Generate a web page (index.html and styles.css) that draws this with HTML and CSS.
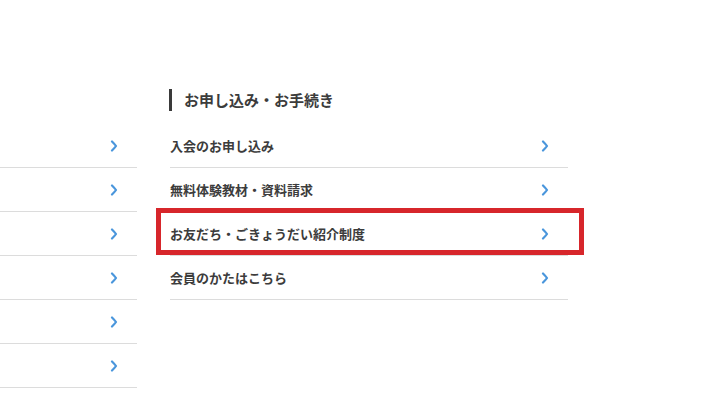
FILE: index.html
```html
<!DOCTYPE html>
<html lang="ja">
<head>
<meta charset="utf-8">
<link rel="stylesheet" href="styles.css">
</head>
<body>
<div class="page">
  <div class="col col-left">
    <ul class="list">
      <li class="row"><span class="label"></span><svg class="chev" viewBox="0 0 8 12" width="8" height="12"><path d="M2 1.5 Q5 4.5 6 6 Q5 7.5 2 10.5"/></svg></li>
      <li class="row"><span class="label"></span><svg class="chev" viewBox="0 0 8 12" width="8" height="12"><path d="M2 1.5 Q5 4.5 6 6 Q5 7.5 2 10.5"/></svg></li>
      <li class="row"><span class="label"></span><svg class="chev" viewBox="0 0 8 12" width="8" height="12"><path d="M2 1.5 Q5 4.5 6 6 Q5 7.5 2 10.5"/></svg></li>
      <li class="row"><span class="label"></span><svg class="chev" viewBox="0 0 8 12" width="8" height="12"><path d="M2 1.5 Q5 4.5 6 6 Q5 7.5 2 10.5"/></svg></li>
      <li class="row"><span class="label"></span><svg class="chev" viewBox="0 0 8 12" width="8" height="12"><path d="M2 1.5 Q5 4.5 6 6 Q5 7.5 2 10.5"/></svg></li>
      <li class="row"><span class="label"></span><svg class="chev" viewBox="0 0 8 12" width="8" height="12"><path d="M2 1.5 Q5 4.5 6 6 Q5 7.5 2 10.5"/></svg></li>
    </ul>
  </div>
  <div class="col col-right">
    <h2 class="heading">お申し込み・お手続き</h2>
    <ul class="list">
      <li class="row"><span class="label">入会のお申し込み</span><svg class="chev" viewBox="0 0 8 12" width="8" height="12"><path d="M2 1.5 Q5 4.5 6 6 Q5 7.5 2 10.5"/></svg></li>
      <li class="row"><span class="label">無料体験教材・資料請求</span><svg class="chev" viewBox="0 0 8 12" width="8" height="12"><path d="M2 1.5 Q5 4.5 6 6 Q5 7.5 2 10.5"/></svg></li>
      <li class="row row-highlight"><span class="label">お友だち・ごきょうだい紹介制度</span><svg class="chev" viewBox="0 0 8 12" width="8" height="12"><path d="M2 1.5 Q5 4.5 6 6 Q5 7.5 2 10.5"/></svg></li>
      <li class="row"><span class="label">会員のかたはこちら</span><svg class="chev" viewBox="0 0 8 12" width="8" height="12"><path d="M2 1.5 Q5 4.5 6 6 Q5 7.5 2 10.5"/></svg></li>
    </ul>
  </div>
</div>
</body>
</html>
```
FILE: styles.css
```css
html, body {
  margin: 0;
  padding: 0;
  background: #ffffff;
}
body {
  font-family: "Noto Sans CJK JP", "Noto Sans", sans-serif;
  color: #3c3c3c;
  width: 720px;
  height: 400px;
  overflow: hidden;
}
.page {
  display: flex;
  gap: 33px;
  padding-top: 124px;
}
.col-left {
  width: 137px;
}
.col-right {
  width: 398px;
  margin-top: -35px;
}
.heading {
  margin: 0 0 13px 0;
  font-size: 15px;
  font-weight: 700;
  line-height: 22px;
  height: 22px;
  border-left: 3px solid #3a3a3a;
  padding-left: 12px;
  margin-left: -1px;
  color: #3c3c3c;
  letter-spacing: 0;
}
.list {
  list-style: none;
  margin: 0;
  padding: 0;
}
.row {
  display: flex;
  align-items: center;
  justify-content: space-between;
  height: 43px;
  border-bottom: 1px solid #dcdcdc;
  padding-right: 19px;
}
.label {
  font-size: 13px;
  font-weight: 700;
  line-height: 20px;
  color: #3c3c3c;
}
.chev {
  display: block;
  fill: none;
  stroke: #4a96dc;
  stroke-width: 2.2;
  stroke-linecap: round;
  stroke-linejoin: round;
}
.row-highlight {
  position: relative;
}
.row-highlight::after {
  content: "";
  position: absolute;
  top: -4px;
  left: -14px;
  right: -16px;
  bottom: 0;
  border: 5px solid #d7262b;
  pointer-events: none;
}
```
